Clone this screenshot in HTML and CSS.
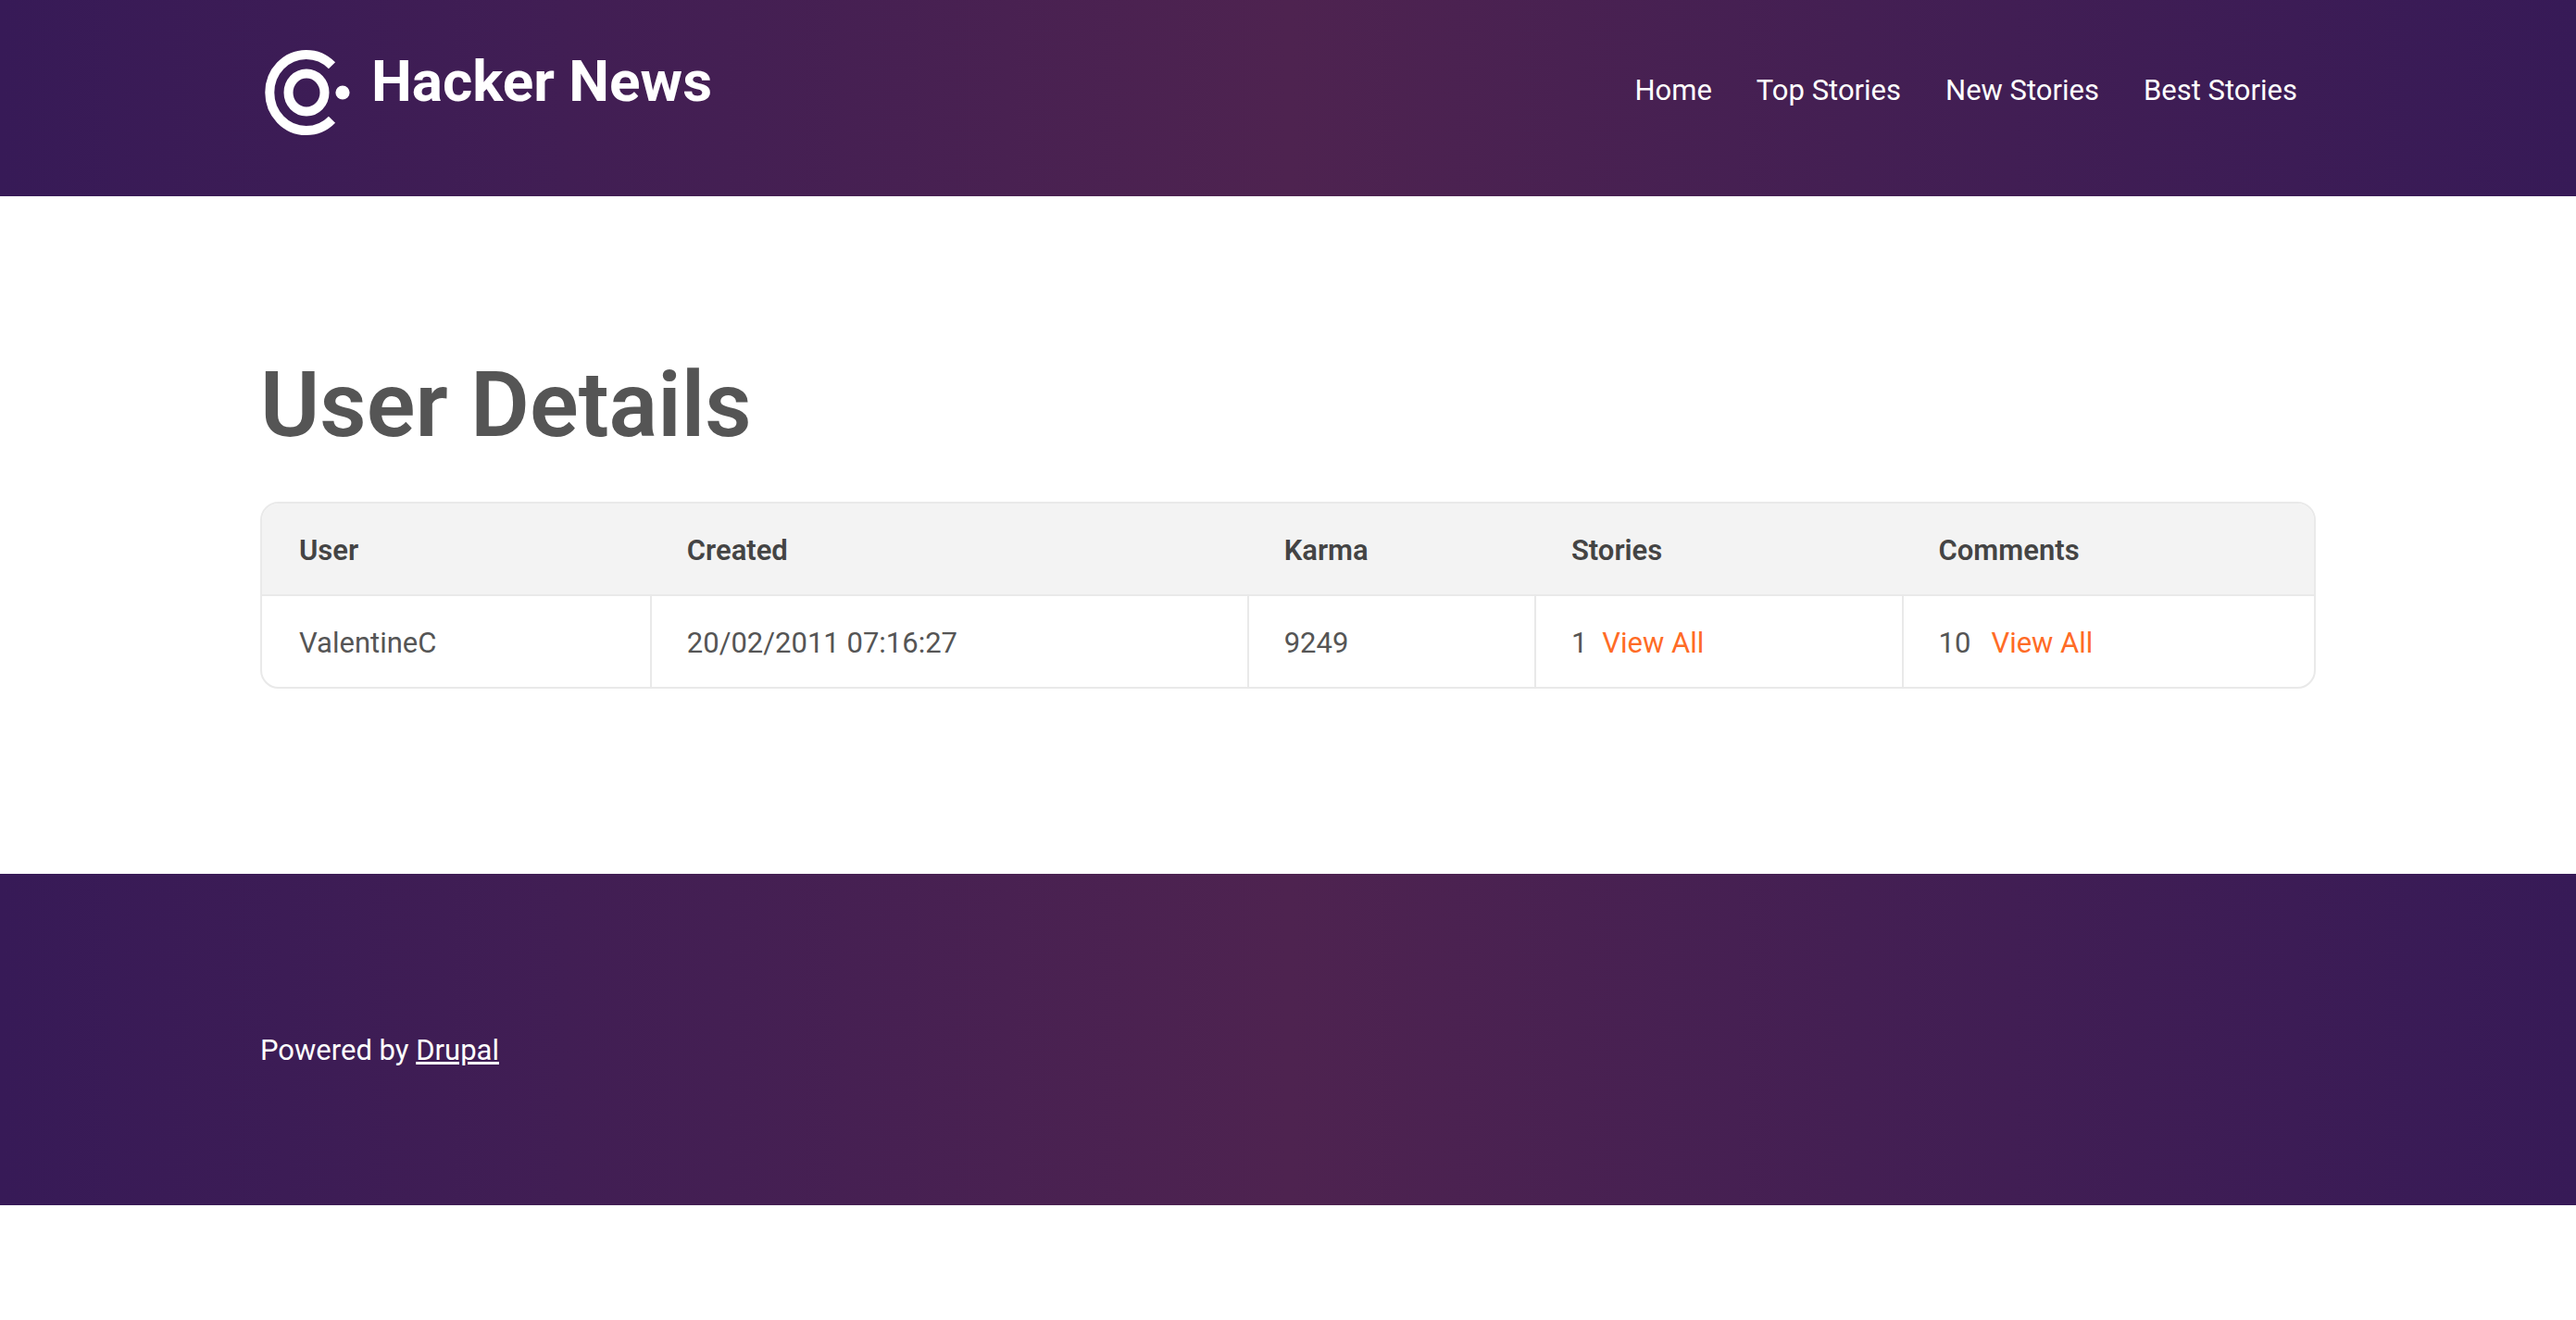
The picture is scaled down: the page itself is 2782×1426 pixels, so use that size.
FILE: index.html
```html
<!DOCTYPE html>
<html lang="en">
<head>
<meta charset="utf-8">
<meta name="viewport" content="width=device-width, initial-scale=1">
<title>User Details | Hacker News</title>
<link rel="stylesheet" href="styles.css">
</head>
<body>
<header class="site-header">
  <div class="container header-inner">
    <a class="brand" href="#">
      <svg class="brand-logo" viewBox="0 0 100 100" aria-hidden="true">
        <g fill="none" stroke="#fff" stroke-width="10">
          <path d="M77.5 20.8A39.5 41 0 1 0 77.5 79.2"/>
          <ellipse cx="50" cy="50" rx="19.5" ry="20.5"/>
        </g>
        <circle cx="89" cy="50" r="7.6" fill="#fff"/>
      </svg>
      <span class="brand-name">Hacker News</span>
    </a>
    <nav class="main-nav" aria-label="Main">
      <a href="#">Home</a>
      <a href="#">Top Stories</a>
      <a href="#">New Stories</a>
      <a href="#">Best Stories</a>
    </nav>
  </div>
</header>
<main class="container content">
  <h1 class="page-title">User Details</h1>
  <table class="details">
    <colgroup>
      <col class="col-user"><col class="col-created"><col class="col-karma"><col class="col-stories"><col class="col-comments">
    </colgroup>
    <thead>
      <tr><th scope="col">User</th><th scope="col">Created</th><th scope="col">Karma</th><th scope="col">Stories</th><th scope="col">Comments</th></tr>
    </thead>
    <tbody>
      <tr>
        <td>ValentineC</td>
        <td>20/02/2011 07:16:27</td>
        <td>9249</td>
        <td><div class="count"><span>1</span><a href="#">View All</a></div></td>
        <td><div class="count count-wide"><span>10</span><a href="#">View All</a></div></td>
      </tr>
    </tbody>
  </table>
</main>
<footer class="site-footer">
  <div class="container">Powered by <a href="#">Drupal</a></div>
</footer>
</body>
</html>
```
FILE: styles.css
```css
* {
  box-sizing: border-box;
}

body {
  margin: 0;
  background: #fff;
  color: #555;
  font-family: Roboto, "Liberation Sans", sans-serif;
  font-size: 31px;
  line-height: 48px;
}

.container {
  width: calc(100% - 80px);
  max-width: 2220px;
  margin: 0 auto;
}

.site-header,
.site-footer {
  background: linear-gradient(90deg, #371a57, #4e2350 50%, #371a57);
  color: #fff;
}

.header-inner {
  display: flex;
  flex-wrap: wrap;
  justify-content: space-between;
  align-items: flex-start;
  min-height: 212px;
  padding: 50px 20px 60px 0;
}

.brand {
  display: flex;
  gap: 20px;
  color: #fff;
  text-decoration: none;
}

.brand-logo {
  width: 100px;
  height: 100px;
}

.brand-name {
  font-size: 62px;
  font-weight: 700;
  line-height: 76px;
}

.main-nav {
  display: flex;
  flex-wrap: wrap;
  gap: 48px;
  padding-top: 24px;
}

.main-nav a {
  color: #fff;
  text-decoration: none;
}

.content {
  padding: 166px 0 200px;
}

.page-title {
  margin: 0 0 44px;
  font-size: 98px;
  font-weight: 600;
  line-height: 120px;
}

.details {
  width: 100%;
  table-layout: fixed;
  border: 2px solid #e9e9e9;
  border-radius: 20px;
  border-spacing: 0;
  overflow: hidden;
}

.col-user { width: 18.9%; }
.col-created { width: 29.1%; }
.col-karma { width: 14%; }
.col-stories { width: 17.9%; }
.col-comments { width: 20.1%; }

.details th,
.details td {
  padding: 27px 40px 23px;
  text-align: left;
}

.details th {
  background: #f3f3f3;
  color: #444;
  font-weight: 600;
}

.details td {
  border-top: 2px solid #e9e9e9;
}

.details td + td {
  padding-left: 38px;
  border-left: 2px solid #e9e9e9;
}

.details a {
  color: #ff6b26;
  text-decoration: none;
}

.count {
  display: flex;
  gap: 16px;
}

.count-wide {
  gap: 22px;
}

.site-footer {
  padding: 167px 0 143px;
}

.site-footer a {
  color: #fff;
}
```
